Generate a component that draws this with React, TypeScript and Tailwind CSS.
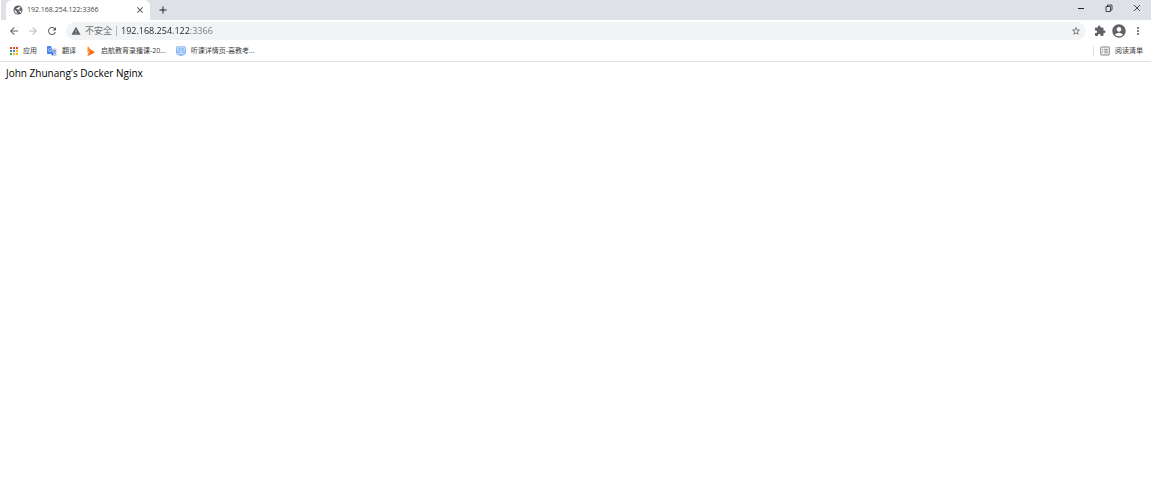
import React from "react";
import { MdArrowBack, MdArrowForward, MdRefresh, MdWarning, MdStarBorder, MdExtension, MdAccountCircle, MdMoreVert, MdClose, MdAdd } from "react-icons/md";

function GlobeIcon() {
	return (
		<svg className="size-2.5" viewBox="0 0 20 20">
			<circle cx="10" cy="10" r="9" fill="#5f6368" />
			<path d="M3 9.500 7 12.500v2l2 1.500v1.500C5.500 17 3 14 3 9.500zM11 3.500c2 .3 3.500 1 4.500 2.500l-2.500.5v2l-2.500 1-2-1.500H7V6h3zM12 11.500h5c-.3 2-1.500 3.500-3 4.500V14l-2-1z" fill="#fff" />
		</svg>
	);
}

function AppsIcon() {
	const colors = ["#ea4335", "#ea4335", "#ea4335", "#34a853", "#4285f4", "#fbbc04", "#34a853", "#fbbc04", "#fbbc04"];
	return (
		<svg className="size-2" viewBox="0 0 8 8">
			{colors.map((color, i) => (
				<rect key={i} x={(i % 3) * 3} y={Math.floor(i / 3) * 3} width="2" height="2" fill={color} />
			))}
		</svg>
	);
}

function TranslateIcon() {
	return (
		<svg className="size-2.5" viewBox="0 0 20 20">
			<path d="M8 5h9.500c.8 0 1.500.7 1.500 1.500v12c0 .8-.7 1.500-1.500 1.500H12z" fill="#c3cfe6" />
			<path d="M12.500 9.500h5M15 8v1.500M17 9.500c-.5 2.500-2 4.500-4 5.500M14 11.500c.8 1.800 2 3.300 3.500 4" fill="none" stroke="#5c7ba8" strokeWidth="1.2" />
			<path d="M1.500 0H8l5 16H1.500C.7 16 0 15.300 0 14.500v-13C0 .7.7 0 1.500 0z" fill="#4285f4" />
			<path d="M9 16h4l-3 4z" fill="#2a56c6" />
			<path d="M8.300 5.700A3.200 3.200 0 1 0 9.200 8.300H6" fill="none" stroke="#fff" strokeWidth="1" />
		</svg>
	);
}

function CourseIcon() {
	return (
		<svg className="size-2.5" viewBox="0 0 20 20">
			<path d="M3 2c0-.8.8-1.200 1.500-.8l5 6L3 14z" fill="#ff8a2c" />
			<path d="M3 19 8 6.500l8.500 5c1 .6 1 1.500 0 2L5 19.500c-1 .5-2 .2-2-.5z" fill="#f9690e" />
			<path d="m7.500 14 2-5L4 18z" fill="#ffc08a" />
		</svg>
	);
}

function LessonIcon() {
	return (
		<svg className="size-2.5" viewBox="0 0 20 20" fill="none" stroke="#5b9bf0" strokeWidth="1.400">
			<path d="M2 1c2 1 3 1 4 0 3 1 5 1 8 0 1 1 2 1 4 0l1 5v8c-1 3-4 4-9 5-5-1-8-2-9-5V6z" fill="#d6e6fc" />
			<path d="M4 5.500h12M1 10h18M5 7.500h3M12 7.500h3M3 13h5M12 13h5M6 16c2 1 6 1 8 0" />
		</svg>
	);
}

function ListIcon() {
	return (
		<svg className="size-2.5" viewBox="0 0 20 20" fill="none" stroke="#5f6368" strokeWidth="1.600">
			<rect x="1.500" y="2" width="17" height="16" rx="1" />
			<path d="M4.500 6.500h2M8.500 6.500h7M4.500 10h2M8.500 10h7M4.500 13.500h2M8.500 13.500h7" />
		</svg>
	);
}

const bookmarks = [
	{ label: "应用", icon: <AppsIcon /> },
	{ label: "翻译", icon: <TranslateIcon /> },
	{ label: "启航教育录播课-20...", icon: <CourseIcon /> },
	{ label: "听课详情页-高教考...", icon: <LessonIcon /> },
];

function TabStrip() {
	return (
		<header className="ml-px flex h-5 items-start bg-[#dee1e6] pl-[5px]">
			<div className="flex h-5 w-36 items-center rounded-t-md bg-white pr-[5px] pl-[7px]">
				<GlobeIcon />
				<span className="ml-1 flex-1 text-[7px] text-[#45484c]">192.168.254.122:3366</span>
				<button aria-label="Close tab">
					<MdClose className="size-2.5 text-[#3c4043]" />
				</button>
			</div>
			<button aria-label="New tab" className="ml-[7px] flex h-5 items-center">
				<MdAdd className="size-3 text-[#202124]" />
			</button>
			<div className="ml-auto flex h-4 items-center gap-5 pr-2.5 text-[#222]">
				<button aria-label="Minimize">
					<svg className="size-2" viewBox="0 0 8 8" stroke="currentColor">
						<path d="M1 4.500h6" />
					</svg>
				</button>
				<button aria-label="Restore">
					<svg className="size-2" viewBox="0 0 8 8" fill="none" stroke="currentColor" strokeWidth=".8">
						<path d="M1 2.500h4.500v5H1zM2.500 2.500V1H7v5H5.500" />
					</svg>
				</button>
				<button aria-label="Close">
					<svg className="size-2" viewBox="0 0 8 8" stroke="currentColor" strokeWidth=".8">
						<path d="m1 1 6 6M7 1 1 7" />
					</svg>
				</button>
			</div>
		</header>
	);
}

function Toolbar() {
	return (
		<div className="flex h-[22px] items-center pr-[7px] pl-2 text-[#5f6368]">
			<div className="flex items-center gap-[7px]">
				<button aria-label="Back">
					<MdArrowBack className="size-3" />
				</button>
				<button aria-label="Forward" className="text-[#babcbe]">
					<MdArrowForward className="size-3" />
				</button>
				<button aria-label="Reload">
					<MdRefresh className="size-3" />
				</button>
			</div>
			<div className="ml-2 flex h-[18px] min-w-0 flex-1 items-center rounded-full bg-[#f1f3f4] px-[5px]">
				<MdWarning className="size-2.5" />
				<span className="ml-1 text-[9px] text-[#6f7377]">不安全</span>
				<span className="mx-1 h-2.5 w-px bg-[#b4b7bb]" />
				<input
					aria-label="Address"
					defaultValue="192.168.254.122:3366"
					className="min-w-0 flex-1 bg-linear-to-r from-[#202124] from-[69px] to-[#75797d] to-[69px] bg-clip-text text-[9px] text-transparent outline-none"
				/>
				<button aria-label="Bookmark this page">
					<MdStarBorder className="size-2.5" />
				</button>
			</div>
			<div className="ml-2 flex items-center gap-[5px]">
				<button aria-label="Extensions">
					<MdExtension className="size-3" />
				</button>
				<button aria-label="Profile">
					<MdAccountCircle className="size-4" />
				</button>
				<button aria-label="Menu">
					<MdMoreVert className="size-3" />
				</button>
			</div>
		</div>
	);
}

function BookmarkBar() {
	return (
		<nav className="flex h-5 items-center border-b border-[#dfe1e5] pr-2 pl-2.5 pb-px text-[7px] text-[#3c4043]">
			<div className="flex items-center gap-2.5">
				{bookmarks.map((item) => (
					<a key={item.label} href="#" className="flex items-center gap-[5px]">
						{item.icon}
						{item.label}
					</a>
				))}
			</div>
			<button className="ml-auto flex items-center gap-[5px] border-l border-[#dfe1e5] pl-1.5">
				<ListIcon />
				阅读清单
			</button>
		</nav>
	);
}

export default function App() {
	return (
		<div className="min-h-screen bg-white font-['Open_Sans','Noto_Sans_CJK_SC',sans-serif]">
			<TabStrip />
			<Toolbar />
			<BookmarkBar />
			<main className="px-1.5 pt-[3px]">
				<p className="text-[10px] leading-4 text-black">John Zhunang's Docker Nginx</p>
			</main>
		</div>
	);
}
